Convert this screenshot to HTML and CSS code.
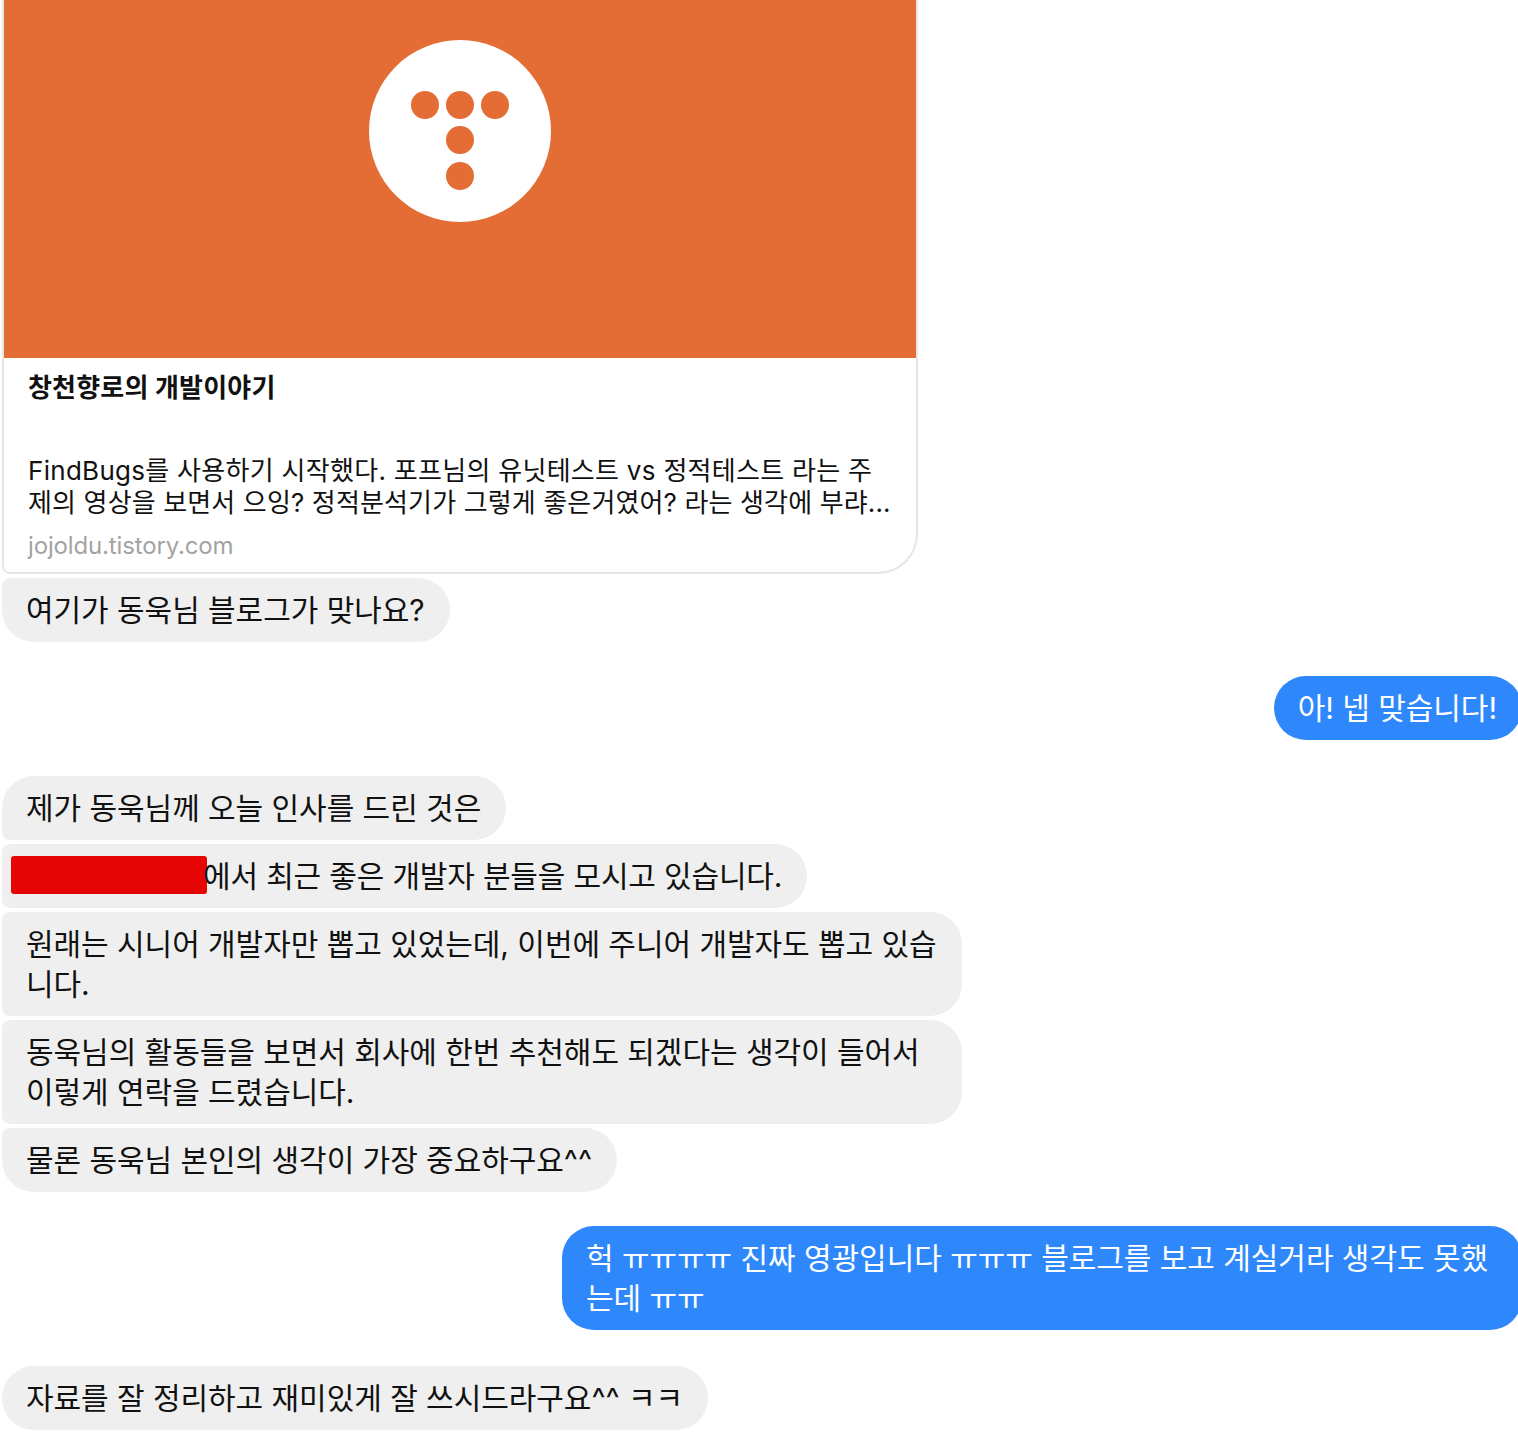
FILE: index.html
```html
<!DOCTYPE html>
<html lang="ko">
<head>
  <meta charset="UTF-8" />
  <title>Messages</title>
  <meta name="viewport" content="width=device-width, initial-scale=1" />
  <link rel="stylesheet" href="styles.css">
</head>
<body>

  <div class="chat">
    <div class="group">
      <div class="card">
        <div class="card-image">
          <svg class="logo" width="182" height="182" viewBox="0 0 182 182">
            <circle cx="91" cy="91" r="91" fill="#fff" />
            <circle cx="56" cy="65" r="14" fill="#e36d35" />
            <circle cx="91" cy="65" r="14" fill="#e36d35" />
            <circle cx="126" cy="65" r="14" fill="#e36d35" />
            <circle cx="91" cy="100" r="14" fill="#e36d35" />
            <circle cx="91" cy="136" r="14" fill="#e36d35" />
          </svg>
        </div>
        <div class="card-body">
          <div class="card-title">창천향로의 개발이야기</div>
          <div class="card-desc">FindBugs를 사용하기 시작했다. 포프님의 유닛테스트 vs 정적테스트 라는 주<br><span class="desc-end">제의 영상을 보면서 으잉? 정적분석기가 그렇게 좋은거였어? 라는 생각에 부랴...</span></div>
          <div class="card-url">jojoldu.tistory.com</div>
        </div>
      </div>
      <div class="bubble last">여기가 동욱님 블로그가 맞나요?</div>
    </div>

    <div class="group mine gap-a">
      <div class="bubble solo">아! 넵 맞습니다!</div>
    </div>

    <div class="group gap-b">
      <div class="bubble first">제가 동욱님께 오늘 인사를 드린 것은</div>
      <div class="bubble tight"><span class="redact"></span>에서 최근 좋은 개발자 분들을 모시고 있습니다.</div>
      <div class="bubble">원래는 시니어 개발자만 뽑고 있었는데, 이번에 주니어 개발자도 뽑고 있습니다.</div>
      <div class="bubble">동욱님의 활동들을 보면서 회사에 한번 추천해도 되겠다는 생각이 들어서 이렇게 연락을 드렸습니다.</div>
      <div class="bubble last">물론 동욱님 본인의 생각이 가장 중요하구요^^</div>
    </div>

    <div class="group mine gap-a">
      <div class="bubble solo">헉 ㅠㅠㅠㅠ 진짜 영광입니다 ㅠㅠㅠ 블로그를 보고 계실거라 생각도 못했는데 ㅠㅠ</div>
    </div>

    <div class="group gap-b">
      <div class="bubble solo">자료를 잘 정리하고 재미있게 잘 쓰시드라구요^^ ㅋㅋ</div>
    </div>
  </div>

</body>
</html>
```

FILE: styles.css
```css
body {
  margin: 0;
  background: #fff;
  color: #111;
  font-family: Inter, 'Noto Sans CJK KR', sans-serif;
  overflow-x: hidden;
}
.chat {
  display: flex;
  flex-direction: column;
  padding-left: 2px;
}
.group {
  display: flex;
  flex-direction: column;
  align-items: flex-start;
  gap: 4px;
}
.gap-a {
  margin-top: 34px;
}
.gap-b {
  margin-top: 36px;
}
.mine {
  align-items: flex-end;
  margin-right: -4px;
}

/* link preview */
.card {
  width: 912px;
  border: 2px solid #e6e6e6;
  border-top: none;
  border-radius: 0 0 40px 8px;
  overflow: hidden;
}
.card-image {
  height: 358px;
  background: #e36d35;
  display: flex;
  justify-content: center;
  padding-top: 40px;
  box-sizing: border-box;
}
.logo {
  display: block;
}
.card-body {
  padding: 14px 24px 10px;
}
.card-title {
  font-size: 26px;
  font-weight: 700;
  line-height: 32px;
  letter-spacing: 0.2px;
  height: 83px;
}
.card-desc {
  font-size: 26px;
  line-height: 32px;
  letter-spacing: 0.29px;
  white-space: nowrap;
}
.desc-end {
  letter-spacing: 0.14px;
}
.card-url {
  font-size: 24px;
  line-height: 32px;
  letter-spacing: -0.15px;
  color: #a3a3a3;
  margin-top: 11px;
}

/* messages */
.bubble {
  box-sizing: border-box;
  max-width: 960px;
  padding: 12px 25px 12px 24px;
  font-size: 30px;
  line-height: 40px;
  letter-spacing: -0.05px;
  background: #efefef;
  border-radius: 8px 32px 32px 8px;
}
.tight {
  letter-spacing: -0.17px;
}
.first {
  border-top-left-radius: 32px;
}
.last {
  border-bottom-left-radius: 32px;
}
.solo {
  border-radius: 32px;
}
.mine .bubble {
  background: #2e88fb;
  color: #fff;
}
.redact {
  display: inline-block;
  width: 196px;
  height: 38px;
  margin-left: -15px;
  margin-right: -4px;
  vertical-align: -7px;
  background: #e60505;
  border-radius: 3px;
}
```
